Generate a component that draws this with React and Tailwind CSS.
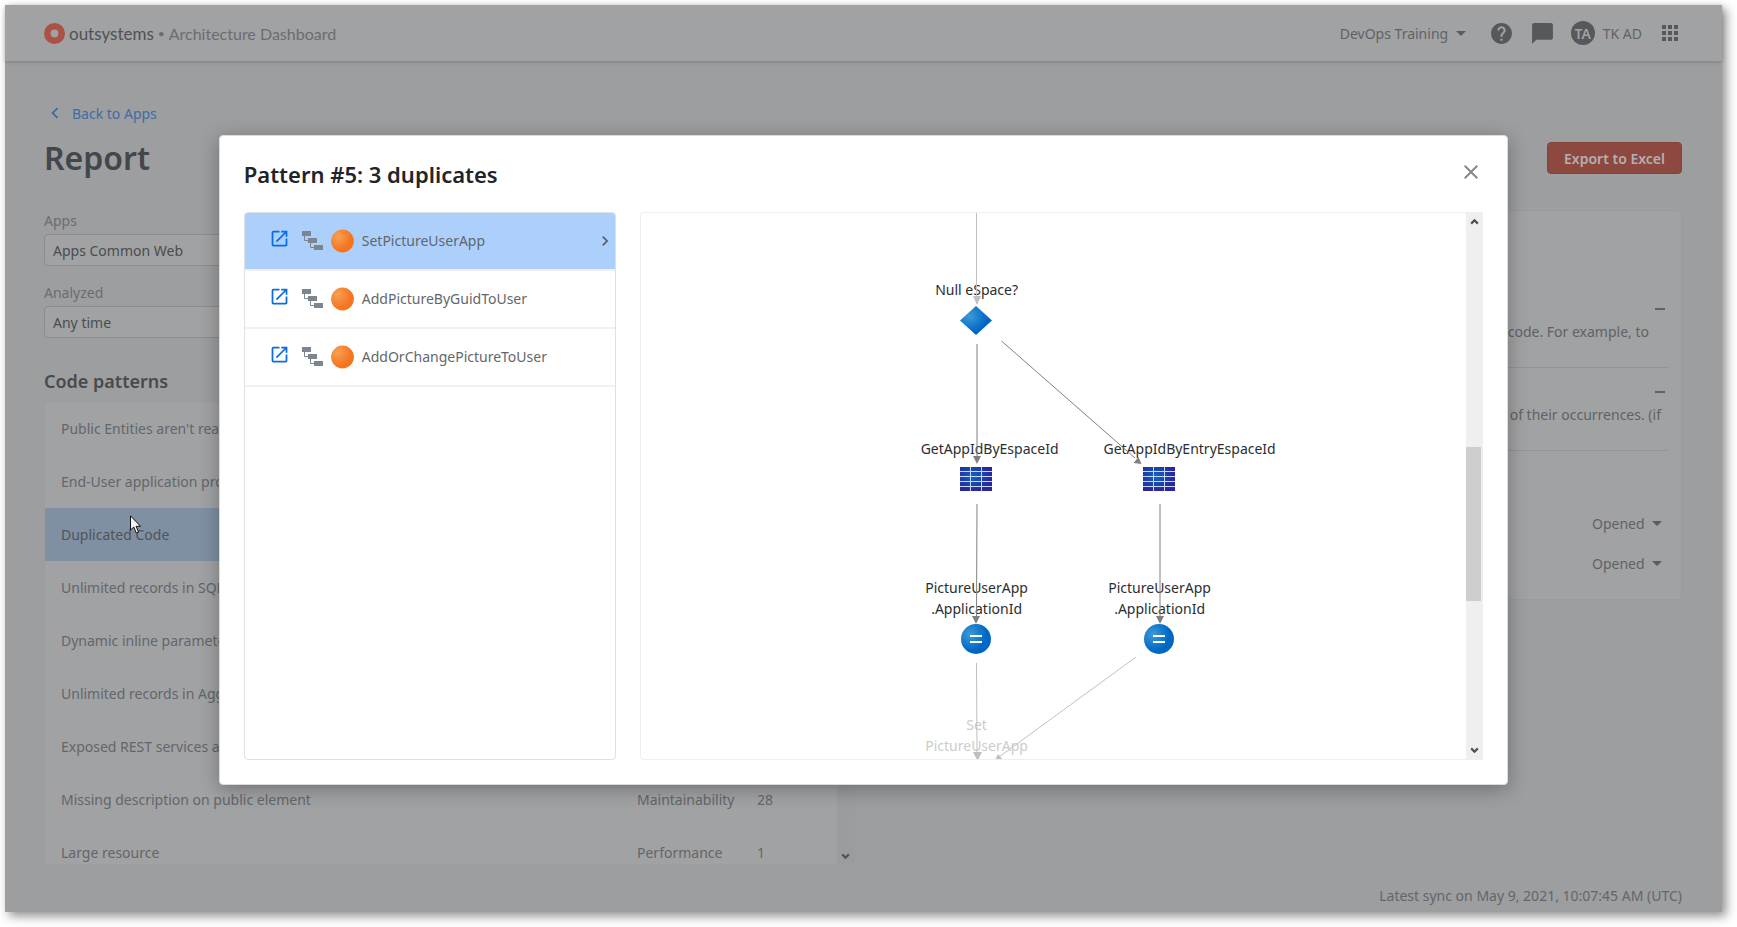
import React from "react";
import {
  MdApps,
  MdArrowDropDown,
  MdChatBubble,
  MdClose,
  MdHelp,
  MdKeyboardArrowLeft,
  MdKeyboardArrowRight,
  MdOpenInNew,
} from "react-icons/md";

const PATTERNS = [
  { name: "Public Entities aren't read-only", category: "Architecture", count: 12 },
  { name: "End-User application providing services", category: "Architecture", count: 3 },
  { name: "Duplicated Code", category: "Maintainability", count: 5, selected: true },
  { name: "Unlimited records in SQL query", category: "Performance", count: 4 },
  { name: "Dynamic inline parameters", category: "Security", count: 2 },
  { name: "Unlimited records in Aggregate", category: "Performance", count: 9 },
  { name: "Exposed REST services authentication", category: "Security", count: 6 },
  { name: "Missing description on public element", category: "Maintainability", count: 28 },
  { name: "Large resource", category: "Performance", count: 1 },
];

const DUPLICATES = ["SetPictureUserApp", "AddPictureByGuidToUser", "AddOrChangePictureToUser"];

function Logo() {
  return (
    <svg width="21" height="21" viewBox="0 0 21 21" aria-hidden="true">
      <circle cx="10.5" cy="10.5" r="7.2" fill="none" stroke="#ab5245" strokeWidth="6.6" />
    </svg>
  );
}

function TreeIcon() {
  return (
    <svg width="21" height="19" viewBox="0 0 21 19" aria-hidden="true">
      <g fill="#7d868f">
        <rect x="0" y="0" width="9" height="5" />
        <rect x="6" y="7" width="9" height="5" />
        <rect x="12" y="14" width="9" height="5" />
      </g>
      <path d="M2.5 5v4.5H6M8.5 12v4.5H12" fill="none" stroke="#7d868f" />
    </svg>
  );
}

function OrangeBall() {
  return (
    <svg width="23" height="24" viewBox="0 0 23 24" aria-hidden="true">
      <defs>
        <radialGradient id="ball" cx="0.3" cy="0.3" r="0.6">
          <stop offset="0" stopColor="#f6a055" />
          <stop offset="1" stopColor="#f57420" />
        </radialGradient>
      </defs>
      <circle cx="11.5" cy="12" r="11.4" fill="url(#ball)" />
    </svg>
  );
}

function ScrollArrow({ up, color }) {
  return (
    <svg width="9" height="7" viewBox="0 0 9 7" aria-hidden="true">
      <path
        d={up ? "M1.2 5.6 4.5 2.3 7.8 5.6" : "M1.2 1.4 4.5 4.7 7.8 1.4"}
        fill="none"
        stroke={color}
        strokeWidth="2.2"
      />
    </svg>
  );
}

function Field({ id, label, value }) {
  return (
    <div className="flex flex-col gap-[3px]">
      <label htmlFor={id} className="text-[#6a6d70]">
        {label}
      </label>
      <select
        id={id}
        className="h-8 w-full appearance-none rounded border border-[#8b8d90] bg-[#a1a2a3] px-2 text-[#4a4d50]"
      >
        <option>{value}</option>
      </select>
    </div>
  );
}

function InlineSelect({ label, value }) {
  return (
    <div className="flex items-center">
      <select aria-label={label} className="appearance-none bg-transparent text-[#5f6366]">
        <option>{value}</option>
      </select>
      <MdArrowDropDown size={24} className="text-[#5a5d60]" aria-hidden="true" />
    </div>
  );
}

function Header() {
  return (
    <header className="relative flex h-14 shrink-0 items-center justify-between bg-[#a1a2a4] pr-10 pl-[39px] shadow-[0_1px_4px_rgba(0,0,0,0.2)]">
      <div className="flex items-center font-[Lato,sans-serif] text-[17px]">
        <Logo />
        <span className="ml-1 text-[#4f5255]">outsystems</span>
        <span className="mx-1 text-[12px] text-[#6a6d70]">•</span>
        <span className="text-[16px] text-[#6a6d70]">Architecture Dashboard</span>
      </div>
      <div className="flex items-center text-[#55595c]">
        <InlineSelect label="Environment" value="DevOps Training" />
        <button type="button" aria-label="Help" className="ml-4">
          <MdHelp size={25} />
        </button>
        <button type="button" aria-label="Feedback" className="ml-4">
          <MdChatBubble size={25} />
        </button>
        <button type="button" className="ml-4 flex items-center gap-2 text-[#5f6366]">
          <span className="flex size-6 items-center justify-center rounded-full bg-[#55595c] font-semibold text-[#a1a2a4]">
            TA
          </span>
          TK AD
        </button>
        <button type="button" aria-label="Applications" className="ml-4">
          <MdApps size={24} />
        </button>
      </div>
    </header>
  );
}

function PatternList() {
  return (
    <div className="flex min-h-0 flex-1 overflow-hidden rounded border border-[#9b9c9e] bg-[#a1a2a4]">
      <div className="min-w-0 flex-1 overflow-hidden">
        <table className="w-full table-fixed">
          <tbody>
            {PATTERNS.map((p) => (
              <tr
                key={p.name}
                className={p.selected ? "h-[53px] bg-[#8090a2] text-[#4f5459]" : "h-[53px] text-[#63666a]"}
              >
                <td className="truncate pl-4">{p.name}</td>
                <td className="w-[120px]">{p.category}</td>
                <td className="w-[80px]">{p.count}</td>
              </tr>
            ))}
          </tbody>
        </table>
      </div>
      <div className="flex w-[17px] flex-col items-center justify-end bg-[#9b9c9e] pb-1">
        <ScrollArrow color="#505254" />
      </div>
    </div>
  );
}

function DetailSection({ children }) {
  return (
    <section className="flex h-[83px] flex-col gap-1.5 border-b border-[#939597] pt-[18px] text-[#5f6366]">
      <button type="button" aria-label="Collapse" className="mr-1 flex h-3 w-2.5 items-center self-end">
        <span className="h-0.5 w-2.5 bg-[#5f6366]" />
      </button>
      {children}
    </section>
  );
}

function DetailPanel() {
  return (
    <section className="flex flex-col self-start rounded border border-[#9b9c9e] bg-[#a1a2a4] px-3 pt-[74px] pb-4">
      <DetailSection>
        <p className="pr-5 text-right">Repeated blocks of code. For example, to</p>
      </DetailSection>
      <DetailSection>
        <p className="pr-2 text-right">Refactor some of their occurrences. (if</p>
      </DetailSection>
      <div className="mt-[52px] flex flex-col items-end">
        <div className="flex h-10 items-center">
          <InlineSelect label="Status of first pattern" value="Opened" />
        </div>
        <div className="flex h-10 items-center">
          <InlineSelect label="Status of second pattern" value="Opened" />
        </div>
      </div>
    </section>
  );
}

function DuplicateList() {
  return (
    <ul className="w-[30%] shrink-0 overflow-hidden rounded border border-[#dee0e2]">
      {DUPLICATES.map((name, i) => (
        <li
          key={name}
          className={
            i === 0
              ? "flex h-[58px] items-center border-b-2 border-[#f0f1f2] bg-[#acd0fb] pl-6"
              : "flex h-[58px] items-center border-b-2 border-[#f0f1f2] pl-6"
          }
        >
          <a href="#open" aria-label={"Open " + name} className="pb-1.5 text-[#0b6ce0]">
            <MdOpenInNew size={21} />
          </a>
          <span className="ml-3 flex items-center gap-2">
            <span className="pb-0.5">
              <TreeIcon />
            </span>
            <OrangeBall />
            <span className="pb-0.5 text-[#63676b]">{name}</span>
          </span>
          {i === 0 && <MdKeyboardArrowRight size={20} className="ml-auto text-[#55606b]" />}
        </li>
      ))}
    </ul>
  );
}

function TableGlyph({ x, y }) {
  return (
    <g transform={`translate(${x} ${y})`}>
      <rect width="32" height="24" fill="url(#tbl)" />
      <path d="M0 4.5H32M0 9.5H32M0 14.5H32M0 19.5H32M10.5 0V24M21.5 0V24" stroke="#c9d8f2" />
    </g>
  );
}

function AssignGlyph({ x, y }) {
  return (
    <g>
      <circle cx={x} cy={y} r="15" fill="url(#blue)" />
      <path d={`M${x - 6} ${y - 3}h12M${x - 6} ${y + 3}h12`} stroke="#fff" strokeWidth="2" />
    </g>
  );
}

function NodeLabel({ left, top, faded, children }) {
  return (
    <p
      className={
        faded
          ? "absolute w-48 text-center whitespace-pre-line text-[#cbcccd]"
          : "absolute w-48 text-center whitespace-pre-line text-[#2b2e31]"
      }
      style={{ left: left - 96, top }}
    >
      {children}
    </p>
  );
}

function FlowDiagram() {
  return (
    <div className="relative min-w-0 flex-1 overflow-hidden">
      <NodeLabel left={336} top={66}>Null eSpace?</NodeLabel>
      <NodeLabel left={349} top={225}>GetAppIdByEspaceId</NodeLabel>
      <NodeLabel left={549} top={225}>GetAppIdByEntryEspaceId</NodeLabel>
      <NodeLabel left={336} top={364}>{"PictureUserApp\n.ApplicationId"}</NodeLabel>
      <NodeLabel left={519} top={364}>{"PictureUserApp\n.ApplicationId"}</NodeLabel>
      <NodeLabel left={336} top={501} faded>{"Set\nPictureUserApp"}</NodeLabel>
      <svg width="826" height="547" className="absolute top-0 left-0" aria-hidden="true">
        <defs>
          <radialGradient id="blue" cx="0.3" cy="0.35" r="0.55">
            <stop offset="0" stopColor="#3d9ad8" />
            <stop offset="1" stopColor="#0068c4" />
          </radialGradient>
          <radialGradient id="tbl" cx="0.4" cy="0.4" r="0.6">
            <stop offset="0" stopColor="#0b66c2" />
            <stop offset="1" stopColor="#2a259c" />
          </radialGradient>
        </defs>
        <g stroke="#c0c0c0" fill="none">
          <path d="M335.5 0V84M335.5 450L336 540M495 444L358 544" />
        </g>
        <g fill="#c0c0c0">
          <path d="M332 83h8l-4 9zM332 539h9l-4.500 9zM354 547l3-6 5 6z" />
        </g>
        <g stroke="#808080" fill="none">
          <path d="M336 131V244M360.500 128L494 245M336 291L335.500 404M519 291V404" />
        </g>
        <g fill="#808080">
          <path d="M332 243h8l-4 8zM500.500 251l-3-7-5 6zM331 403h8l-4 8zM515 403h8l-4 8z" />
        </g>
        <path d="M335 93l16 14.500-16 14.500-16-14.500z" fill="url(#blue)" />
        <TableGlyph x={319} y={254} />
        <TableGlyph x={502} y={254} />
        <AssignGlyph x={335} y={426} />
        <AssignGlyph x={518} y={426} />
      </svg>
    </div>
  );
}

function DuplicatesDialog() {
  return (
    <div className="absolute inset-0 flex items-center justify-center pt-[3px]">
      <div
        role="dialog"
        aria-labelledby="dialog-title"
        className="flex h-[650px] max-h-full w-[75.1%] flex-col rounded border border-[#d9dbdd] bg-white px-6 pb-6 shadow-[0_4px_20px_rgba(0,0,0,0.3)]"
      >
        <div className="flex h-[76px] shrink-0 items-center justify-between">
          <h2 id="dialog-title" className="text-[22px] font-semibold text-[#212529]">
            Pattern #5: 3 duplicates
          </h2>
          <button type="button" aria-label="Close" className="pb-1 text-[#85888b]">
            <MdClose size={24} />
          </button>
        </div>
        <div className="flex min-h-0 flex-1 gap-6">
          <DuplicateList />
          <div className="flex min-w-0 flex-1 overflow-hidden rounded-l border border-r-0 border-[#efefef]">
            <FlowDiagram />
            <div className="flex w-[17px] shrink-0 flex-col items-center justify-between bg-[#efefef] py-[5px]">
              <ScrollArrow up color="#505050" />
              <div className="mt-[75px] h-[154px] w-[15px] self-start bg-[#cdcdcd]" />
              <ScrollArrow color="#505050" />
            </div>
          </div>
        </div>
      </div>
    </div>
  );
}

export default function App() {
  return (
    <div className="h-screen bg-white pt-[5px] pr-[15px] pb-[15px] pl-[5px] font-['Noto_Sans',sans-serif] text-[14px] leading-[21px]">
      <div className="relative flex h-full flex-col bg-[#9d9ea0] shadow-[4px_4px_10px_rgba(0,0,0,0.45)]">
        <Header />
        <main className="flex min-h-0 flex-1 flex-col pt-[41px] pr-10 pl-[39px]">
          <a href="#apps" className="flex items-center gap-1.5 self-start text-[#3c6ca5]">
            <MdKeyboardArrowLeft size={22} />
            Back to Apps
          </a>
          <div className="mt-2.5 flex items-center justify-between">
            <h1 className="text-[32px] leading-[48px] font-semibold text-[#44474a]">Report</h1>
            <button
              type="button"
              className="h-8 rounded border border-[#83453a] bg-[#8d493f] px-4 font-semibold text-[#b4b0af]"
            >
              Export to Excel
            </button>
          </div>
          <div className="mt-7 grid min-h-0 flex-1 grid-cols-2 gap-4">
            <div className="flex min-h-0 flex-col">
              <div className="flex flex-col gap-4">
                <Field id="apps" label="Apps" value="Apps Common Web" />
                <Field id="analyzed" label="Analyzed" value="Any time" />
              </div>
              <h2 className="mt-[30px] mb-1.5 text-[18px] leading-[27px] font-semibold text-[#484b4e]">
                Code patterns
              </h2>
              <PatternList />
            </div>
            <DetailPanel />
          </div>
          <footer className="mt-5 pb-1.5 text-right text-[#63666a]">
            Latest sync on May 9, 2021, 10:07:45 AM (UTC)
          </footer>
        </main>
        <DuplicatesDialog />
        <svg
          width="13"
          height="20"
          viewBox="0 0 13 20"
          className="absolute top-[510px] left-[125px]"
          aria-hidden="true"
        >
          <path
            d="M.5.8V15l3.300-3 2.400 6 2.300-1-2.400-5.700h4.500z"
            fill="#f4f4f4"
            stroke="#111"
          />
        </svg>
      </div>
    </div>
  );
}
